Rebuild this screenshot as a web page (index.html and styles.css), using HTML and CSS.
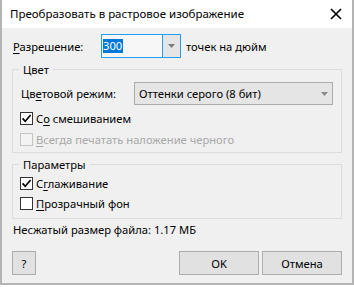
FILE: index.html
```html
<!DOCTYPE html>
<html lang="ru">
<head>
<meta charset="utf-8">
<title>Преобразовать в растровое изображение</title>
<link rel="stylesheet" href="styles.css">
</head>
<body>
<div class="dialog">
  <div class="titlebar">
    <span class="title">Преобразовать в растровое изображение</span>
    <svg class="close" viewBox="0 0 12 12"><path d="M1 1 L11 11 M11 1 L1 11" stroke="#000" stroke-width="1.7" fill="none"/></svg>
  </div>
  <div class="content">
    <div class="res-row">
      <span class="res-label"><u>Р</u>азрешение:</span>
      <div class="combo-edit">
        <span class="edit"><span class="sel">300</span></span>
        <span class="drop"><svg class="arrow" viewBox="0 0 7 4"><path d="M0 0 H7 L3.5 4 Z" fill="#7a7a7a"/></svg></span>
      </div>
      <span class="unit">точек на дюйм</span>
    </div>

    <div class="group group-color">
      <div class="group-title">Цвет</div>
      <div class="mode-row">
        <span class="mode-label">Цв<u>е</u>товой режим:</span>
        <div class="combo-select">
          <span>Оттенки серого (8 бит)</span>
          <svg class="arrow" viewBox="0 0 7 4"><path d="M0 0 H7 L3.5 4 Z" fill="#8a8a8a"/></svg>
        </div>
      </div>
      <div class="check-row">
        <span class="box"><svg viewBox="0 0 11 11"><path d="M1.6 5.4 L4.2 8.3 L9.6 2" stroke="#000" stroke-width="1.7" fill="none"/></svg></span>
        <span>С<u>о</u> смешиванием</span>
      </div>
      <div class="check-row disabled">
        <span class="box"></span>
        <span><u>В</u>сегда печатать наложение черного</span>
      </div>
    </div>

    <div class="group group-params">
      <div class="group-title">Параметры</div>
      <div class="check-row">
        <span class="box"><svg viewBox="0 0 11 11"><path d="M1.6 5.4 L4.2 8.3 L9.6 2" stroke="#000" stroke-width="1.7" fill="none"/></svg></span>
        <span>С<u>г</u>лаживание</span>
      </div>
      <div class="check-row">
        <span class="box"></span>
        <span><u>П</u>розрачный фон</span>
      </div>
    </div>

    <div class="filesize">Несжатый размер файла: 1.17 МБ</div>

    <div class="buttons">
      <button class="btn help">?</button>
      <button class="btn">OK</button>
      <button class="btn">Отмена</button>
    </div>
  </div>
</div>
</body>
</html>
```

FILE: styles.css
```css
body {
  margin: 0;
  background: #fff;
  font-family: "Noto Sans", "Liberation Sans", sans-serif;
  font-size: 11.2px;
  color: #000;
}

.dialog {
  width: 354px;
  height: 285px;
  box-sizing: border-box;
  border: 2px solid #b4b4b4;
  border-top: 0;
  background: #f0f0f0;
  display: flex;
  flex-direction: column;
}

.titlebar {
  height: 28px;
  flex: none;
  background: #fff;
  display: flex;
  align-items: center;
  padding: 0 10px 0 8px;
}

.title {
  flex: 1;
  line-height: 16px;
  font-size: 11.5px;
}

.close {
  width: 12px;
  height: 12px;
  display: block;
}

.content {
  flex: 1;
  padding: 6px 10px 0 10px;
  display: flex;
  flex-direction: column;
}

u {
  text-decoration: underline;
  text-underline-offset: 2px;
}

.res-row {
  height: 24px;
  display: flex;
  align-items: center;
}

.res-label {
  width: 88px;
  padding-left: 1px;
}

.combo-edit {
  width: 80px;
  height: 24px;
  box-sizing: border-box;
  border: 1px solid #1e9ff0;
  display: flex;
}

.edit {
  flex: 1;
  background: #f7f7f7;
  display: flex;
  align-items: center;
  padding-left: 1px;
}

.sel {
  background: #0078d7;
  color: #fff;
  line-height: 14px;
  padding-right: 1px;
}

.drop {
  width: 18px;
  box-sizing: border-box;
  border-left: 1px solid #1e9ff0;
  background: #e5e5e5;
  display: flex;
  align-items: center;
  justify-content: center;
}

.arrow {
  width: 7px;
  height: 4px;
  display: block;
}

.unit {
  margin-left: 5px;
}

.group {
  border: 1px solid #dcdcdc;
  display: flex;
  flex-direction: column;
  padding: 0 8px 0 7px;
  margin-top: 11px;
}

.group-title {
  align-self: flex-start;
  margin: -7px 0 0 -1px;
  padding: 0 4px;
  line-height: 14px;
  background: #f0f0f0;
}

.mode-row {
  margin-top: 5px;
  height: 23px;
  display: flex;
  align-items: center;
}

.mode-label {
  width: 113px;
  padding-left: 1px;
}

.combo-select {
  width: 199px;
  height: 23px;
  box-sizing: border-box;
  border: 1px solid #acacac;
  background: #e5e5e5;
  display: flex;
  align-items: center;
  justify-content: space-between;
  padding: 0 4px 0 4px;
}

.check-row {
  display: flex;
  align-items: center;
  gap: 3px;
}

.box {
  width: 13px;
  height: 13px;
  box-sizing: border-box;
  border: 1px solid #333;
  background: #fff;
  display: flex;
}

.box svg {
  width: 11px;
  height: 11px;
  display: block;
}

.disabled {
  color: #a8a8a8;
}

.disabled .box {
  border-color: #c4c4c4;
  background: #f3f3f3;
}

.group-color {
  padding-bottom: 2px;
}

.group-color .check-row {
  height: 21px;
}

.group-color .mode-row + .check-row {
  margin-top: 3px;
}

.group-params {
  padding-bottom: 5px;
}

.group-params .check-row {
  height: 20px;
}

.group-params .group-title + .check-row {
  margin-top: 1px;
}

.filesize {
  margin-top: 3px;
  line-height: 16px;
  padding-left: 1px;
}

.buttons {
  margin-top: 13px;
  height: 24px;
  display: flex;
  gap: 3px;
}

.btn {
  width: 80px;
  height: 24px;
  box-sizing: border-box;
  border: 1px solid #adadad;
  background: #e1e1e1;
  font: inherit;
  color: #000;
  padding: 0;
}

.help {
  width: 24px;
  margin-right: auto;
}
```
